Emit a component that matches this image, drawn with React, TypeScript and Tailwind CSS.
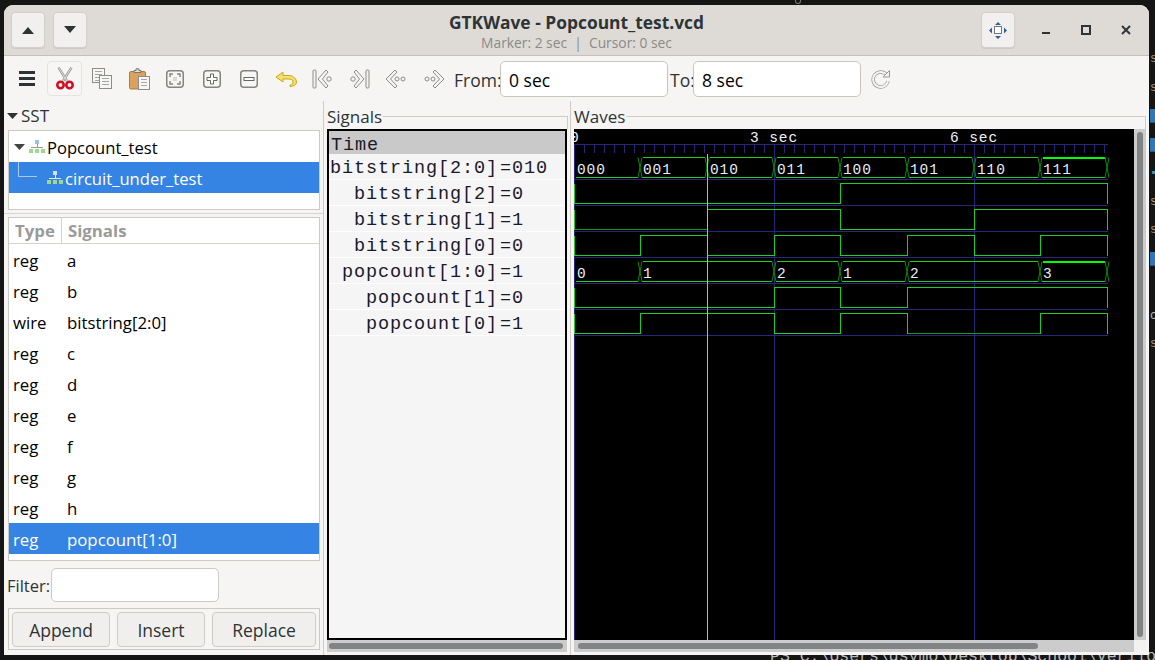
import { FC, ReactNode } from "react";

const STEP = 66.7;
const X0 = 574;
const at = (n: number) => Math.floor(X0 + STEP * n);

const DIM = "#119c11";
const HIGH = "#1fce1f";
const XING = "#0b8a0b";

// [start step, end step, label, level] level 0 = all low, 1 = normal, 2 = all high
const busRows: { top: number; segs: [number, number, string, number][] }[] = [
  {
    top: 157,
    segs: [
      [0, 1, "000", 0],
      [1, 2, "001", 1],
      [2, 3, "010", 1],
      [3, 4, "011", 1],
      [4, 5, "100", 1],
      [5, 6, "101", 1],
      [6, 7, "110", 1],
      [7, 8, "111", 2],
    ],
  },
  {
    top: 261,
    segs: [
      [0, 1, "0", 0],
      [1, 3, "1", 1],
      [3, 4, "2", 1],
      [4, 5, "1", 1],
      [5, 7, "2", 1],
      [7, 8, "3", 2],
    ],
  },
];

const bitRows: { top: number; levels: number[] }[] = [
  { top: 183, levels: [0, 0, 0, 0, 1, 1, 1, 1] },
  { top: 209, levels: [0, 0, 1, 1, 0, 0, 1, 1] },
  { top: 235, levels: [0, 1, 0, 1, 0, 1, 0, 1] },
  { top: 287, levels: [0, 0, 0, 1, 0, 1, 1, 1] },
  { top: 313, levels: [0, 1, 1, 0, 1, 0, 0, 1] },
];

const separators = [179, 205, 231, 257, 283, 309, 335];

const Waves: FC = () => {
  const ticks = Array.from({ length: 54 }, (_, i) => X0 + i * 10);
  return (
    <svg width={560} height={511} viewBox="574 129 560 511" className="block bg-black" shapeRendering="crispEdges">
      <line x1={574} x2={1108} y1={144.5} y2={144.5} stroke="#27277a" />
      {ticks.map((x) => (
        <line key={x} x1={x + 0.5} x2={x + 0.5} y1={144} y2={153} stroke="#27277a" />
      ))}
      {separators.map((y) => (
        <line key={y} x1={574} x2={1108} y1={y + 0.5} y2={y + 0.5} stroke="#27277a" />
      ))}
      <line x1={574.5} x2={574.5} y1={144} y2={640} stroke="#27277a" />
      <line x1={774.5} x2={774.5} y1={144} y2={640} stroke="#27277a" />
      <line x1={974.5} x2={974.5} y1={144} y2={640} stroke="#27277a" />

      <g fontFamily="'Liberation Mono', monospace" fontSize={14.5} fill="#eef2f6" letterSpacing={0.9}>
        <text x={570} y={142}>0</text>
        <text x={750} y={142}>3 sec</text>
        <text x={950} y={142}>6 sec</text>
      </g>

      {busRows.map((row) =>
        row.segs.map(([a, b, label, level]) => {
          const l = at(a);
          const r = at(b);
          const t = row.top + 0.5;
          const bot = row.top + 20.5;
          return (
            <g key={`${row.top}-${a}`}>
              {level > 0 && (
                <line x1={l + 3} x2={r - 2} y1={t} y2={t} stroke={level === 2 ? "#00ff00" : HIGH} strokeWidth={level === 2 ? 2 : 1} />
              )}
              <line x1={l + 2} x2={r - 2} y1={bot} y2={bot} stroke={HIGH} />
              <g shapeRendering="auto">
                <line x1={r - 2} x2={r + 2} y1={bot} y2={t} stroke={XING} />
                <line x1={r - 2} x2={r + 2} y1={t} y2={bot} stroke={XING} />
              </g>
              <text x={l + 3} y={row.top + 17} fontFamily="'Liberation Mono', monospace" fontSize={14.5} fill="#e8edf2" letterSpacing={0.9} shapeRendering="auto">
                {label}
              </text>
            </g>
          );
        })
      )}

      {bitRows.map((row) => {
        const hi = row.top + 0.5;
        const lo = row.top + 20.5;
        let d = `M574.5 ${hi} V${lo}`;
        let prev = 0;
        row.levels.forEach((v, i) => {
          const x = at(i + 1) + 0.5;
          const y = v ? hi : lo;
          if (i > 0 && v !== prev) d += ` V${y}`;
          d += ` H${x}`;
          prev = v;
        });
        d += ` V${prev ? lo : hi}`;
        return <path key={row.top} d={d} fill="none" stroke={HIGH} />;
      })}
      {/* low stretches are drawn a shade darker in the original */}
      <line x1={575} x2={707} y1={229.5} y2={229.5} stroke={DIM} />
      <line x1={908} x2={1040} y1={333.5} y2={333.5} stroke={DIM} />

      <line x1={707.5} x2={707.5} y1={154} y2={640} stroke="#f09a9a" />
    </svg>
  );
};

const ArrowUp = () => (
  <svg width="14" height="8" viewBox="0 0 14 8"><path d="M7 1 13 8H1z" fill="#2e3436" /></svg>
);
const ArrowDown = () => (
  <svg width="14" height="8" viewBox="0 0 14 8"><path d="M1 0h12L7 7z" fill="#2e3436" /></svg>
);

const HeadButton: FC<{ className?: string; children: ReactNode }> = ({ className, children }) => (
  <div className={`w-[34px] h-[36px] flex items-center justify-center rounded-[4px] bg-[#f2f0ee] border border-[#d3cfca] shadow-[0_1px_1px_rgba(0,0,0,0.08)] ${className ?? ""}`}>
    {children}
  </div>
);

const Scissors = () => (
  <svg width="18" height="23" viewBox="0 0 18 23" fill="none">
    <path d="M2.5 0.5 11 14M15.5 0.5 7 14" stroke="#9a9a9a" strokeWidth="2.4" />
    <path d="M2.5 0.5 11 14M15.5 0.5 7 14" stroke="#e4e4e4" strokeWidth="0.9" />
    <circle cx="4.5" cy="18" r="3.2" stroke="#cf1020" strokeWidth="2.6" />
    <circle cx="13.5" cy="18" r="3.2" stroke="#cf1020" strokeWidth="2.6" />
  </svg>
);

const Sheet: FC<{ x: number; y: number; w: number; h: number }> = ({ x, y, w, h }) => (
  <g>
    <rect x={x + 0.5} y={y + 0.5} width={w} height={h} fill="#f6f6f4" stroke="#8d8d88" />
    {[3, 6, 9, 12].filter((o) => o < h - 1).map((o) => (
      <line key={o} x1={x + 2.5} x2={x + w - 2} y1={y + o + 0.5} y2={y + o + 0.5} stroke="#a6a6a2" />
    ))}
  </g>
);

const CopyIcon = () => (
  <svg width="20" height="21" viewBox="0 0 20 21" shapeRendering="crispEdges">
    <Sheet x={0} y={0} w={12} h={14} />
    <Sheet x={7} y={7} w={12} h={13} />
  </svg>
);

const PasteIcon = () => (
  <svg width="21" height="22" viewBox="0 0 21 22">
    <rect x="0.5" y="3.5" width="16" height="17.5" rx="1.5" fill="#dba25f" stroke="#a87b45" />
    <path d="M5 4.5V2.5h2V0.8h3V2.5h2V4.5z" fill="#dcdcd8" stroke="#77776f" />
    <g shapeRendering="crispEdges"><Sheet x={9} y={8} w={11} h={13} /></g>
  </svg>
);

const RoundBox: FC<{ children: ReactNode }> = ({ children }) => (
  <svg width="18" height="18" viewBox="0 0 18 18" fill="none">
    <rect x="0.75" y="0.75" width="16.5" height="16.5" rx="3" fill="#f6f6f5" stroke="#85857f" strokeWidth="1.5" />
    {children}
  </svg>
);

const Nav: FC<{ flip?: boolean; bar?: boolean; dots?: boolean }> = ({ flip, bar, dots }) => (
  <svg width="22" height="20" viewBox="0 0 22 20" fill="none" style={flip ? { transform: "scaleX(-1)" } : undefined}>
    {bar && <rect x="1" y="1" width="3" height="18" rx="1" fill="#f4f4f2" stroke="#8c8c88" />}
    <path d={bar ? "M14 1 6 10l8 9 2-2-5.5-7L16 3z" : "M10 1 1 10l9 9 2-2-6.500-7L12 3z"} fill="#f4f4f2" stroke="#8c8c88" strokeLinejoin="round" />
    {bar && <circle cx="17" cy="10" r="2.200" stroke="#8c8c88" />}
    {dots && <circle cx="12" cy="10" r="2" stroke="#8c8c88" />}
    {dots && <circle cx="18" cy="10" r="2" stroke="#8c8c88" />}
  </svg>
);

const TreeIcon: FC<{ light?: boolean }> = ({ light }) => (
  <svg width="16" height="13" viewBox="0 0 16 13" shapeRendering="crispEdges" className="shrink-0">
    <rect x="6" y="0" width="4" height="4" fill={light ? "#cfe0f5" : "#9cc0e8"} />
    <path d="M8 4v4M2 7.500h12" stroke={light ? "#e4ecf6" : "#9a9a9a"} fill="none" />
    <rect x="0" y="9" width="4" height="4" fill="#9ed88a" />
    <rect x="6" y="9" width="4" height="4" fill="#9ed88a" />
    <rect x="12" y="9" width="4" height="4" fill="#9ed88a" />
  </svg>
);

const signals: [string, string][] = [
  ["reg", "a"],
  ["reg", "b"],
  ["wire", "bitstring[2:0]"],
  ["reg", "c"],
  ["reg", "d"],
  ["reg", "e"],
  ["reg", "f"],
  ["reg", "g"],
  ["reg", "h"],
];

const traces: [string, string][] = [
  ["bitstring[2:0]", "=010"],
  ["  bitstring[2]", "=0"],
  ["  bitstring[1]", "=1"],
  ["  bitstring[0]", "=0"],
  [" popcount[1:0]", "=1"],
  ["   popcount[1]", "=0"],
  ["   popcount[0]", "=1"],
];

// stray bits of the terminal behind the window, down the right edge
const terminalBits: [string, string][] = [
  ["s", "text-[#b59a6a]"],
  ["s", "text-[#b59a6a]"],
  ["█", "text-[#2f78b8]"],
  ["█", "text-[#2f78b8]"],
  ["▪", "text-[#2f98c8]"],
  ["s", "text-[#b59a6a]"],
  ["s", "text-[#b59a6a]"],
  ["█", "text-[#2f78b8]"],
  ["", "text-[#b59a6a]"],
  ["c", "text-[#b8b8b8]"],
  ["s", "text-[#b59a6a]"],
];

const FooterButton: FC<{ w: string; label: string }> = ({ w, label }) => (
  <div className={`${w} h-[35px] pt-[3px] flex items-center justify-center rounded-[4px] border border-[#cfcbc6] bg-[#f1efed] text-[17.5px] text-[#2e3436]`}>
    {label}
  </div>
);

export default function App() {
  return (
    <div className="relative w-[1155px] h-[660px] overflow-hidden bg-[#151515] font-['Open_Sans','Noto_Sans',sans-serif]">
      {/* terminal peeking out behind the window */}
      <div className="absolute left-[770px] top-[648px] whitespace-pre font-['Liberation_Mono',monospace] text-[16.5px] leading-[18px] text-[#b8b8b8]">PS C:\Users\dsymo\Desktop\School\Verilog</div>
      <div className="absolute left-[795px] top-0 w-[6px] h-[4px] rounded-b-full border border-t-0 border-[#777]" />
      <div className="absolute left-[1150px] top-[45px] w-[5px] overflow-hidden flex flex-col font-['Liberation_Mono',monospace] text-[12px] leading-[28.5px]">
        {terminalBits.map(([glyph, color], i) => (
          <div key={i} className={`h-[28.5px] ${color}`}>{glyph}</div>
        ))}
      </div>

      <div className="absolute left-[4px] top-[5px] w-[1145px] h-[650px] rounded-t-[9px] overflow-hidden bg-[#f6f5f4] flex flex-col">
        {/* header bar */}
        <div className="h-[51px] shrink-0 bg-[#dedbd7] border-b border-[#c5c1ba] flex items-start pt-[7px] pl-[7px] pr-[8px] relative">
          <HeadButton><ArrowUp /></HeadButton>
          <HeadButton className="ml-[8px]"><ArrowDown /></HeadButton>
          <div className="flex-1" />
          <HeadButton>
            <svg width="18" height="17" viewBox="0 0 18 17" shapeRendering="crispEdges">
              <rect x="5.500" y="4.500" width="7" height="7" fill="#fbfbfb" stroke="#777" />
              <path d="M9 0l3 3H6zM9 17l-3-3h6zM0 8.500l3-3v6zM18 8.500l-3 3v-6z" fill="#2f5f9e" shapeRendering="auto" />
            </svg>
          </HeadButton>
          <div className="w-[126px] flex justify-between items-center h-[36px] pl-[26px] pr-[10px]">
            <svg width="10" height="10" viewBox="0 0 10 10"><rect x="1" y="7" width="8" height="2" fill="#2e3436" /></svg>
            <svg width="10" height="10" viewBox="0 0 10 10"><rect x="1" y="1" width="8" height="8" fill="none" stroke="#2e3436" strokeWidth="2" /></svg>
            <svg width="10" height="10" viewBox="0 0 10 10"><path d="M1 1l8 8M9 1 1 9" stroke="#2e3436" strokeWidth="2" /></svg>
          </div>
          <div className="absolute left-0 right-0 top-[6px] text-center pointer-events-none">
            <div className="text-[17.4px] leading-[22px] font-bold text-[#2e3436]">GTKWave - Popcount_test.vcd</div>
            <div className="text-[13.8px] leading-[19px] text-[#8a8a86]">Marker: 2 sec &nbsp;|&nbsp; Cursor: 0 sec</div>
          </div>
        </div>

        {/* toolbar */}
        <div className="h-[45px] shrink-0 flex items-center text-[#2e3436] text-[17.5px]">
          <div className="ml-[15px] w-[16px] flex flex-col gap-[3px]">
            <div className="h-[3px] bg-[#2e3436]" />
            <div className="h-[3px] bg-[#2e3436]" />
            <div className="h-[3px] bg-[#2e3436]" />
          </div>
          <div className="ml-[12px] w-[35px] h-[35px] flex items-center justify-center rounded-[4px] border border-[#e6e4e1] bg-[#f7f6f5]"><Scissors /></div>
          <div className="ml-[10px] w-[20px]"><CopyIcon /></div>
          <div className="ml-[17px] w-[21px]"><PasteIcon /></div>
          <div className="ml-[16px] w-[18px]">
            <RoundBox>
              <path d="M4 7V4h3M11 4h3v3M14 11v3h-3M7 14H4v-3" stroke="#85857f" strokeWidth="1.500" />
              <rect x="7" y="7" width="4" height="4" fill="#d8d8d6" />
            </RoundBox>
          </div>
          <div className="ml-[19px] w-[18px]">
            <RoundBox><path d="M7.500 4h3v3.500H14v3h-3.500V14h-3v-3.500H4v-3h3.500z" fill="#fff" stroke="#66665f" /></RoundBox>
          </div>
          <div className="ml-[19px] w-[18px]">
            <RoundBox><rect x="4" y="7.500" width="10" height="3" fill="#fff" stroke="#66665f" /></RoundBox>
          </div>
          <div className="ml-[17px] w-[22px]">
            <svg width="22" height="16" viewBox="0 0 22 16"><path d="M8 1 1 6l7 5V8h6c3 0 4 1.500 4 3s-1 3-3 3v1.500c4 0 6.500-2 6.500-4.500S19 4.500 14 4.500H8z" fill="#f3df6c" stroke="#c9a820" strokeLinejoin="round" /></svg>
          </div>
          <div className="ml-[15px] w-[22px]"><Nav bar /></div>
          <div className="ml-[14px] w-[22px]"><Nav bar flip /></div>
          <div className="ml-[15px] w-[22px]"><Nav dots /></div>
          <div className="ml-[16px] w-[22px]"><Nav dots flip /></div>
          <span className="ml-[9px] w-[46px] pt-[3px]">From:</span>
          <div className="w-[168px] h-[36px] pt-[3px] rounded-[5px] border border-[#c9c5be] bg-white flex items-center pl-[8px] text-black">0 sec</div>
          <span className="ml-[2px] w-[23px] pt-[3px]">To:</span>
          <div className="w-[168px] h-[36px] pt-[3px] rounded-[5px] border border-[#c9c5be] bg-white flex items-center pl-[8px] text-black">8 sec</div>
          <div className="ml-[10px]">
            <svg width="20" height="20" viewBox="0 0 20 20" fill="none">
              <path d="M16 6.500A7.500 7.500 0 1 0 17 12" stroke="#9a9a96" strokeWidth="3.500" />
              <path d="M16 6.500A7.500 7.500 0 1 0 17 12" stroke="#f3f3f1" strokeWidth="2" />
              <path d="M18.500 1.500V8h-6.500z" fill="#f3f3f1" stroke="#9a9a96" />
            </svg>
          </div>
        </div>

        {/* panes */}
        <div className="flex-1 min-h-0 flex text-[#2e3436]">
          <div className="w-[320px] shrink-0 border-r border-[#cfcbc5] flex flex-col">
            <div className="h-[29px] flex items-center pl-[3px] text-[17px] shrink-0">
              <svg width="11" height="6" viewBox="0 0 11 6" className="mr-[3px]"><path d="M0 0h11L5.500 6z" fill="#2e3436" /></svg>
              SST
            </div>
            <div className="ml-[4px] mr-[3px] h-[80px] shrink-0 border border-[#cdc9c3] bg-white text-[16.6px]">
              <div className="h-[31px] flex items-center pl-[5px] text-black">
                <svg width="11" height="6" viewBox="0 0 11 6" className="mr-[4px] ml-[0px]"><path d="M0 0h11L5.500 6z" fill="#444" /></svg>
                <TreeIcon />
                <span className="ml-[2px] pt-[4px]">Popcount_test</span>
              </div>
              <div className="relative h-[31px] flex items-center pl-[38px] bg-[#3584e4] text-white">
                <div className="absolute left-[9px] top-0 w-[19px] h-[15px] border-l border-b border-[#a8c8f0]" />
                <TreeIcon light />
                <span className="ml-[2px] pt-[4px]">circuit_under_test</span>
              </div>
            </div>
            <div className="h-[3px] shrink-0" />
            <div className="h-[4px] shrink-0 border-t border-[#d8d4cf]" />
            <div className="ml-[4px] mr-[3px] h-[344px] shrink-0 border border-[#cdc9c3] bg-white text-[16.8px] text-black flex flex-col">
              <div className="h-[26px] pt-[1px] shrink-0 flex items-center border-b border-[#d6d2cd] font-bold text-[#9a9a9a]">
                <div className="w-[53px] pl-[6px] border-r border-[#d6d2cd]">Type</div>
                <div className="pl-[6px]">Signals</div>
              </div>
              {signals.map(([type, name]) => (
                <div key={name} className="h-[31px] pt-[2px] shrink-0 flex items-center">
                  <div className="w-[54px] pl-[4px]">{type}</div>
                  <div className="pl-[4px]">{name}</div>
                </div>
              ))}
              <div className="h-[31px] pt-[2px] shrink-0 flex items-center bg-[#3584e4] text-white">
                <div className="w-[54px] pl-[4px]">reg</div>
                <div className="pl-[4px]">popcount[1:0]</div>
              </div>
            </div>
            <div className="h-[47px] shrink-0 flex items-center pl-[3px] text-[16.5px]">
              <span className="w-[44px] pt-[4px]">Filter:</span>
              <div className="w-[168px] h-[34px] rounded-[5px] border border-[#cdc9c3] bg-white" />
            </div>
            <div className="ml-[4px] mr-[3px] h-[42px] shrink-0 border border-[#cdc9c3] flex items-center gap-[7px] pl-[3px]">
              <FooterButton w="w-[98px]" label="Append" />
              <FooterButton w="w-[88px]" label="Insert" />
              <FooterButton w="w-[104px]" label="Replace" />
            </div>
          </div>

          <div className="w-[247px] shrink-0 border-r border-[#cfcbc5] flex flex-col pl-[3px] pr-[2px]">
            <div className="relative h-[28px] pt-[2px] shrink-0 text-[17px] leading-[28px]">
              <span>Signals</span>
              <div className="absolute left-[56px] right-0 top-[15px] border-t border-[#d0ccc6]" />
              <div className="absolute right-0 top-[15px] h-[13px] border-r border-[#d0ccc6]" />
            </div>
            <div className="h-[511px] w-[240px] shrink-0 border-2 border-black bg-[#f5f5f5] font-['Liberation_Mono',monospace] text-[18.5px] tracking-[0.9px] text-[#1a1a2a] overflow-hidden">
              <div className="h-[23px] bg-[#c9c9c9] pl-[2px] pt-[2px] leading-[26px]">Time</div>
              {traces.map(([name, value]) => (
                <div key={name} className="h-[26px] pt-[3px] leading-[24px] border-b border-white flex whitespace-pre pl-[1px]">
                  <span className="w-[170px]">{name}</span>
                  <span>{value}</span>
                </div>
              ))}
            </div>
            <div className="h-[12px] shrink-0 bg-[#cccccc] w-[240px] flex items-center px-[2px]">
              <div className="w-[234px] h-[6px] rounded-full bg-[#808484]" />
            </div>
          </div>

          <div className="flex-1 min-w-0 flex flex-col pl-[3px] pr-[3px]">
            <div className="relative h-[28px] pt-[2px] shrink-0 text-[17px] leading-[28px]">
              <span>Waves</span>
              <div className="absolute left-[52px] right-0 top-[15px] border-t border-[#d0ccc6]" />
              <div className="absolute right-0 top-[15px] h-[13px] border-r border-[#d0ccc6]" />
            </div>
            <div className="flex">
              <Waves />
              <div className="w-[12px] h-[511px] bg-[#cccccc] flex justify-center pt-[3px]">
                <div className="w-[6px] h-[505px] rounded-full bg-[#808484]" />
              </div>
            </div>
            <div className="flex h-[12px]">
              <div className="w-[560px] bg-[#cccccc] flex items-center pl-[4px]">
                <div className="w-[460px] h-[6px] rounded-full bg-[#808484]" />
              </div>
              <div className="w-[12px] bg-[#f3f2f0]" />
            </div>
          </div>
        </div>
      </div>
    </div>
  );
}
